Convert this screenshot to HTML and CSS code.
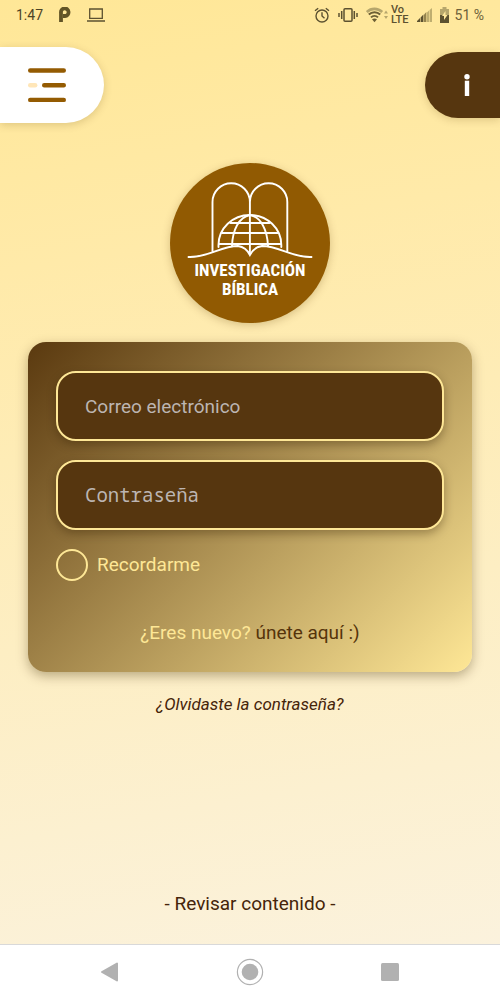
FILE: index.html
```html
<!DOCTYPE html>
<html lang="es">
<head>
<meta charset="utf-8">
<meta name="viewport" content="width=device-width, initial-scale=1">
<title>Investigación Bíblica</title>
<link rel="stylesheet" href="styles.css">
</head>
<body>
<div class="status">
  <div class="status-group status-left">
    <span class="clock">1:47</span>
    <svg width="12" height="15" viewBox="0 0 12 15"><path d="M2 15V5.800A3.800 3.800 0 1 1 6 9H4" fill="none" stroke="#625426" stroke-width="3.800"/></svg>
    <svg width="18" height="14" viewBox="0 0 18 14"><path d="M2.7 1h12.6v9.3H2.7zM0 13h18" fill="none" stroke="#5c5130" stroke-width="1.3"/></svg>
  </div>
  <div class="status-group status-right">
    <svg width="16" height="16" viewBox="0 0 16 16" fill="none" stroke="#5c5130" stroke-width="1.4"><circle cx="8" cy="9" r="6"/><path d="M8 5.3V9l2.5 2.3M1 3.8 4.2 1.2M15 3.8 11.8 1.2"/></svg>
    <svg width="20" height="16" viewBox="0 0 20 16" fill="none" stroke="#5c5130" stroke-width="1.5"><rect x="6" y="1.7" width="8" height="12.6" rx="1"/><path d="M3.7 4v8M16.3 4v8M1 6v4M19 6v4"/></svg>
    <svg width="23" height="16" viewBox="0 0 23 16"><g fill="none" stroke-width="2"><path d="M.8 5a11 11 0 0 1 15.400 0" stroke="#b6a66c" stroke-width="2.600"/><path d="M2.800 7.600a8.300 8.300 0 0 1 11.400 0M5 10.400a5 5 0 0 1 7 0" stroke="#6d5f35"/></g><path d="m6 12.300 2.500 3 2.500-3Q8.500 10.800 6 12.300z" fill="#6d5f35"/><path d="m18 6.500 2-3 2 3zM18 9l2 3 2-3z" fill="#b6a66c"/></svg>
    <span class="volte"><span>Vo</span><span>LTE</span></span>
    <svg width="15" height="14" viewBox="0 0 15 14"><path d="M0 14v-1l3-3v4zM3.600 14V9.400l2.800-2.800V14z" fill="#5c5130"/><path d="M7 14V6.500L9.400 4v10z" fill="#94834d"/><path d="M10 14V4.500L12 2.500V14zM12.600 14V2L15 0v14z" fill="#bfae70"/></svg>
    <svg width="9" height="16" viewBox="0 0 9 16"><path d="M0 2h2.500V0h4v2H9v6H0z" fill="#b6a66c"/><path d="M0 8h9v8H0z" fill="#5c5130"/><path d="M5.500 4 2 9h2v4l3.500-5h-2z" fill="#ffe89c"/></svg>
    <span class="percent">51 %</span>
  </div>
</div>
<header class="top">
  <button class="menu" type="button" aria-label="Menú">
    <svg width="40" height="36" viewBox="0 0 40 36" stroke="#945b02" stroke-width="4.400" stroke-linecap="round"><path d="M3.200 3.500h33.600M17.200 18.200h19.600M3.200 32.900h33.600"/><path d="M3.200 18.200h5" stroke="#ffe6b8"/></svg>
  </button>
  <button class="info" type="button" aria-label="Información">
    <svg width="8" height="22" viewBox="0 0 8 22" fill="#fff"><circle cx="4" cy="2.800" r="2.700"/><path d="M1.800 6.700h4.400V22H1.800z"/></svg>
  </button>
</header>
<main class="content">
  <div class="logo">
    <svg width="126" height="80" viewBox="0 0 126 80" fill="none" stroke="#fff" stroke-width="1.900" stroke-linecap="round"><path d="M25.500 70V21a18.700 18.700 0 0 1 37.400 0 18.700 18.700 0 0 1 37.400 0v49M62.900 21v52"/><path d="M31.500 66V64a31.400 30 0 0 1 62.800 0v2"/><path d="M45 65C45.500 49 52 36 62.900 34 74 36 80.300 49 81 65"/><path d="M43.500 42h39M35 52h56M32 63h62"/><path d="M1.500 76C20 77 34 65 51 65Q59 66 62.900 74 67 66 75 65C92 65 106 77 124.500 76"/></svg>
    <span class="brand">INVESTIGACIÓN</span>
    <span class="brand">BÍBLICA</span>
  </div>
  <form class="card">
    <input class="field" type="email" placeholder="Correo electrónico" aria-label="Correo electrónico">
    <input class="field field-password" type="password" placeholder="Contraseña" aria-label="Contraseña">
    <label class="remember"><input class="check" type="checkbox">Recordarme</label>
    <p class="join">¿Eres nuevo? <a href="#">únete aquí :)</a></p>
  </form>
  <a class="forgot" href="#">¿Olvidaste la contraseña?</a>
  <a class="review" href="#">- Revisar contenido -</a>
</main>
<nav class="system">
  <button type="button" aria-label="Atrás"><svg width="20" height="20" viewBox="0 0 20 20"><path d="M2 10 17 1.500v17z" fill="#b1b1b1" stroke="#b1b1b1" stroke-width="2" stroke-linejoin="round"/></svg></button>
  <button type="button" aria-label="Inicio"><svg width="28" height="28" viewBox="0 0 28 28"><circle cx="14" cy="14" r="12.600" fill="none" stroke="#b1b1b1" stroke-width="1.200"/><circle cx="14" cy="14" r="8.300" fill="#b1b1b1"/></svg></button>
  <button type="button" aria-label="Recientes"><svg width="18" height="18" viewBox="0 0 18 18"><rect width="18" height="18" rx="1.500" fill="#b1b1b1"/></svg></button>
</nav>
</body>
</html>
```
FILE: styles.css
```css
* { box-sizing: border-box; }
body {
  margin: 0;
  min-height: 100vh;
  display: flex;
  flex-direction: column;
  font-family: Roboto, "Noto Sans", sans-serif;
  font-size: 19px;
  line-height: 24px;
  color: #45240a;
  background: linear-gradient(170deg, #ffe797 0%, #ffeaa9 25%, #fdeec3 60%, #fbf2dd 95%);
}
svg { display: block; }
button { border: 0; padding: 0; cursor: pointer; }
a { color: inherit; text-decoration: none; }

.status {
  display: flex;
  justify-content: space-between;
  height: 29px;
  padding: 0 16px;
  font-size: 14px;
  color: #6d603a;
}
.status-group { display: flex; align-items: center; }
.status-left { gap: 16px; }
.status-right { gap: 8px; }
.clock { color: #4d4426; }
.volte {
  display: flex;
  flex-direction: column;
  margin-left: -6px;
  font-size: 11px;
  line-height: 10px;
  font-weight: 500;
  color: #5c5130;
}
.percent { margin-left: -2px; }

.top {
  display: flex;
  justify-content: space-between;
  align-items: center;
  margin-top: 18px;
}
.menu {
  display: flex;
  align-items: center;
  width: 104px;
  height: 76px;
  padding-left: 27px;
  background: #fff;
  border-radius: 0 38px 38px 0;
  box-shadow: 0 2px 8px rgba(90, 60, 0, 0.2);
}
.info {
  display: flex;
  align-items: center;
  width: 75px;
  height: 66px;
  padding-left: 38px;
  background: #56360f;
  border-radius: 33px 0 0 33px;
  box-shadow: 0 2px 8px rgba(90, 60, 0, 0.2);
}

.content {
  flex: 1;
  display: flex;
  flex-direction: column;
  align-items: center;
  padding: 40px 28px 28px;
}
.logo {
  display: flex;
  flex-direction: column;
  align-items: center;
  width: 160px;
  height: 160px;
  padding-top: 18px;
  border-radius: 50%;
  background: #915a02;
  box-shadow: 0 2px 8px rgba(90, 60, 0, 0.25);
}
.brand {
  font-family: "Liberation Sans Narrow", "Roboto Condensed", "Liberation Sans", sans-serif;
  font-size: 17px;
  font-weight: 700;
  line-height: 19px;
  color: #fff;
}
.card {
  display: flex;
  flex-direction: column;
  align-items: flex-start;
  gap: 19px;
  width: 100%;
  margin-top: 19px;
  padding: 29px 28px 27px;
  border-radius: 18px;
  background: linear-gradient(135deg, #5a390f 0%, #fee796 100%);
  box-shadow: 0 4px 12px rgba(60, 40, 0, 0.35);
}
.field {
  width: 100%;
  height: 70px;
  padding: 0 27px;
  border: 2px solid #fee796;
  border-radius: 20px;
  background: #56360f;
  box-shadow: 0 4px 10px rgba(50, 30, 0, 0.35);
  font-family: inherit;
  font-size: 19px;
  color: #fee796;
}
.field-password { font-family: "Noto Sans Mono", "DejaVu Sans Mono", monospace; }
.field::placeholder { color: #bcb5b2; opacity: 1; }
.remember {
  display: flex;
  align-items: center;
  gap: 9px;
  color: #fee796;
}
.check {
  appearance: none;
  width: 32px;
  height: 32px;
  margin: 0;
  border: 2px solid #fee796;
  border-radius: 50%;
}
.check:checked { background: #56360f; }
.join {
  align-self: center;
  margin: 21px 0 0;
  color: #fee796;
}
.join a { color: #55340b; }
.forgot {
  margin-top: 20px;
  font-size: 17px;
  font-style: italic;
}
.review { margin-top: auto; }

.system {
  display: grid;
  grid-template-columns: repeat(3, 1fr);
  justify-items: center;
  align-items: center;
  height: 56px;
  padding: 0 40px 2px;
  border-top: 1px solid #d9d9d9;
  background: #fff;
}
.system button { background: none; }
```
